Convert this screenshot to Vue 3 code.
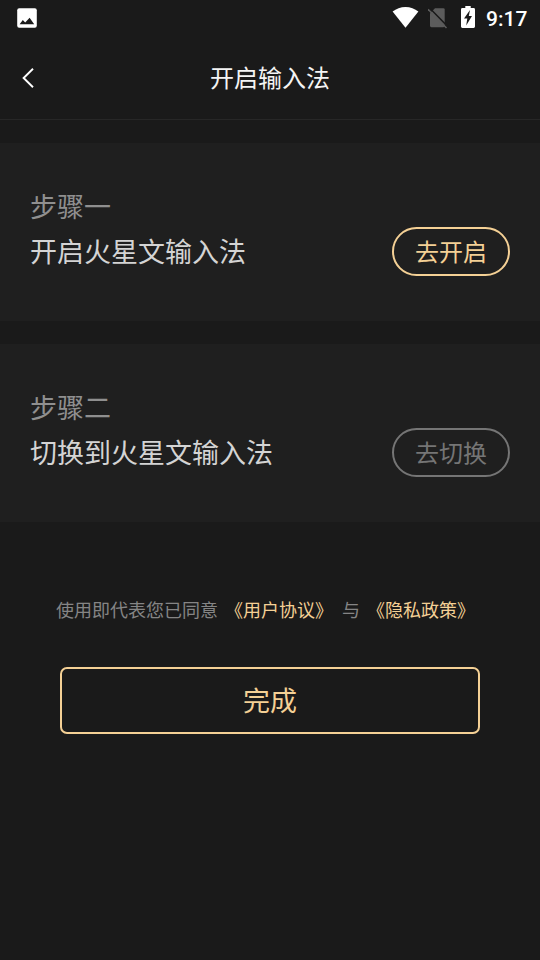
<script setup>
const steps = [
  { label: '步骤一', title: '开启火星文输入法', action: '去开启', active: true },
  { label: '步骤二', title: '切换到火星文输入法', action: '去切换', active: false }
]
</script>

<template>
  <div class="screen">
    <div class="status">
      <svg class="photo" width="20" height="20" viewBox="0 0 20 20">
        <rect x=".2" y=".2" width="19.6" height="19.6" rx="2" fill="#fff" />
        <path d="M2.6 16.2 5.8 12 8.2 14.4 12.6 9.8 17.2 16.2Z" fill="#1a1a1a" />
      </svg>
      <svg class="wifi" width="28" height="22" viewBox="0 0 28 22">
        <path d="M.6 5.6C4.2 2.5 8.6.9 13.5.9S22.8 2.5 26.4 5.6L13.5 21.8Z" fill="#fff" />
      </svg>
      <svg class="sim" width="21" height="21" viewBox="0 0 21 21">
        <path d="M7 .2H15.3Q16.7.2 16.7 1.6V17.8Q16.7 19.2 15.3 19.2H3.4Q2 19.2 2 17.8V5.3Z" fill="#5c5c5c" />
        <path d="M1.3 -.2 19.8 18.6" stroke="#1a1a1a" stroke-width="1.5" />
        <path d="M0 1.2 18.5 20" stroke="#5c5c5c" stroke-width="1.6" />
      </svg>
      <svg class="battery" width="14" height="22" viewBox="0 0 14 22">
        <path d="M4.3 0H9.7V2H12.6Q14 2 14 3.4V20.6Q14 22 12.6 22H1.4Q0 22 0 20.6V3.4Q0 2 1.4 2H4.3Z" fill="#fff" />
        <path d="M9 4 3 12.6H6.3L5.2 19.4 11 9.9H7.8Z" fill="#1a1a1a" />
      </svg>
      <span class="time">9:17</span>
    </div>
    <header class="header">
      <svg class="back" width="14" height="22" viewBox="0 0 14 22">
        <path d="M12 1.8 2.6 11 12 20.2" fill="none" stroke="#fff" stroke-width="1.9" />
      </svg>
      <h1 class="heading">开启输入法</h1>
    </header>
    <main class="steps">
      <section v-for="step in steps" :key="step.label" class="card">
        <div class="copy">
          <div class="label">{{ step.label }}</div>
          <div class="title">{{ step.title }}</div>
        </div>
        <button class="action" :class="{ active: step.active }">{{ step.action }}</button>
      </section>
    </main>
    <p class="terms">
      <span>使用即代表您已同意</span>
      <a class="link">《用户协议》</a>
      <span class="and">与</span>
      <a class="link">《隐私政策》</a>
    </p>
    <button class="done">完成</button>
  </div>
</template>

<style>
body {
  background: #1a1a1a;
}
</style>

<style scoped>
.screen {
  width: 540px;
  height: 960px;
  overflow: hidden;
  background: #1a1a1a;
  color: #fff;
  font-family: "Noto Sans CJK SC", sans-serif;
}
.status {
  display: flex;
  align-items: flex-start;
  height: 36px;
  box-sizing: border-box;
  padding: 6px 12px 0 17px;
}
.status svg {
  flex: none;
}
.photo {
  margin-top: 2px;
}
.wifi {
  margin-left: 355px;
}
.sim {
  margin: 2px 0 0 8px;
}
.battery {
  margin-left: 12px;
}
.time {
  margin-left: 11px;
  font-family: Roboto, sans-serif;
  font-size: 21px;
  font-weight: 500;
  line-height: 26px;
  white-space: nowrap;
}
.header {
  display: grid;
  grid-template-columns: 50px 1fr 50px;
  align-items: center;
  height: 84px;
  box-sizing: border-box;
  border-bottom: 1px solid #272727;
}
.back {
  margin-left: 21px;
}
.heading {
  margin: 0;
  padding-bottom: 2px;
  font-size: 24px;
  font-weight: 400;
  line-height: 36px;
  text-align: center;
  color: #f4f4f4;
}
.steps {
  display: grid;
  gap: 23px;
  padding-top: 23px;
}
.card {
  display: flex;
  justify-content: space-between;
  align-items: flex-start;
  height: 178px;
  box-sizing: border-box;
  padding: 40px 30px 0;
  background: #1f1f1f;
}
.label,
.title {
  font-size: 27px;
  line-height: 45px;
}
.label {
  color: #8f8f8f;
}
.title {
  color: #d4d4d4;
}
.action {
  width: 118px;
  height: 49px;
  box-sizing: border-box;
  margin: 44px 0 0;
  padding: 0 0 2px;
  border: 2px solid #757575;
  border-radius: 25px;
  background: none;
  color: #757575;
  font: inherit;
  font-size: 24px;
  line-height: 43px;
}
.action.active {
  border-color: #f4d095;
  color: #f4d095;
}
.terms {
  display: flex;
  gap: 7px;
  margin: 74px 0 0 56px;
  font-size: 18px;
  line-height: 26px;
  white-space: nowrap;
  color: #858585;
}
.and {
  margin-left: 2px;
}
.link {
  color: #f4d095;
}
.done {
  display: block;
  width: 420px;
  height: 67px;
  box-sizing: border-box;
  margin: 45px auto 0;
  padding: 0 0 2px;
  border: 2px solid #f4d095;
  border-radius: 7px;
  background: none;
  color: #f4d095;
  font: inherit;
  font-size: 27px;
  line-height: 61px;
}
</style>
